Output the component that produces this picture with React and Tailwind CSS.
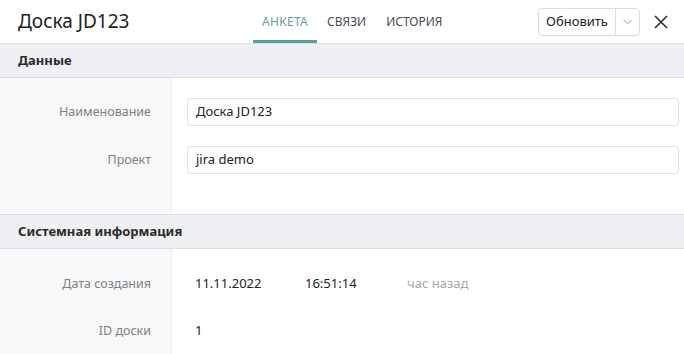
import React from "react";

function Label({ children }) {
  return (
    <div className="h-[28px] flex items-center justify-end text-[12.5px] text-[#808080]">
      {children}
    </div>
  );
}

function Input({ value }) {
  return (
    <div className="h-[28px] flex items-center px-[8px] border border-[#e2e2e2] rounded-[4px] bg-white text-[13px] text-[#222]">
      {value}
    </div>
  );
}

export default function App() {
  return (
    <div className="w-[684px] h-[354px] overflow-hidden bg-white text-[#222]" style={{ fontFamily: '"Noto Sans", "Open Sans", sans-serif' }}>
      {/* header */}
      <div className="h-[44px] flex items-stretch border-b border-[#dcdde0]">
        <div className="w-[253px] shrink-0 pl-[18px] flex items-center text-[19px] text-[#222]">Доска JD123</div>
        <div className="flex items-stretch text-[12px]">
          <div className="relative px-[9px] flex items-center text-[#5e9f9b] tracking-[0.3px]">
            АНКЕТА
            <div className="absolute left-0 right-0 bottom-0 h-[3px] bg-[#5a9e96]" />
          </div>
          <div className="px-[10px] flex items-center text-[#4a4a55]">СВЯЗИ</div>
          <div className="px-[10px] flex items-center text-[#4a4a55]">ИСТОРИЯ</div>
        </div>
        <div className="ml-auto flex items-center pr-[16px]">
          <div className="h-[28px] flex border border-[#dcdcdc] rounded-[4px]">
            <div className="w-[77px] flex items-center justify-center text-[13px] text-[#222] border-r border-[#dcdcdc]">Обновить</div>
            <div className="w-[23px] flex items-center justify-center">
              <svg width="9" height="6" viewBox="0 0 9 6" fill="none">
                <path d="M0.5 0.8 L4.5 4.8 L8.5 0.8" stroke="#9a9a9a" strokeWidth="1" />
              </svg>
            </div>
          </div>
          <div className="ml-[14px] w-[14px] h-[14px] flex items-center justify-center">
            <svg width="14" height="14" viewBox="0 0 14 14" fill="none">
              <path d="M1 1 L13 13 M13 1 L1 13" stroke="#333" strokeWidth="1.7" />
            </svg>
          </div>
        </div>
      </div>

      {/* section 1 header */}
      <div className="h-[34px] flex items-center px-[18px] bg-[#eff0f3] border-b border-[#dcdde0] text-[13px] font-bold text-[#2a2a2a]">
        Данные
      </div>
      {/* section 1 body */}
      <div className="h-[136px] flex">
        <div className="w-[172px] shrink-0 bg-[#f8f9fb] border-r border-[#ececec] pt-[20px] pr-[20px] flex flex-col gap-[20px]">
          <Label>Наименование</Label>
          <Label>Проект</Label>
        </div>
        <div className="flex-1 pt-[20px] pl-[15px] pr-[5px] flex flex-col gap-[20px]">
          <Input value="Доска JD123" />
          <Input value="jira demo" />
        </div>
      </div>

      {/* section 2 header */}
      <div className="h-[35px] flex items-center px-[18px] bg-[#eff0f3] border-y border-[#dcdde0] text-[13px] font-bold text-[#2a2a2a]">
        Системная информация
      </div>
      <div className="h-[106px] flex">
        <div className="w-[172px] shrink-0 bg-[#f8f9fb] border-r border-[#ececec] pt-[21px] pr-[20px] flex flex-col gap-[19px]">
          <Label>Дата создания</Label>
          <Label>ID доски</Label>
        </div>
        <div className="flex-1 pt-[21px] pl-[23px] flex flex-col gap-[19px] text-[13px] text-[#222]">
          <div className="h-[28px] flex items-center">
            <div className="w-[110px]">11.11.2022</div>
            <div className="w-[102px]">16:51:14</div>
            <div className="text-[#a8a8a8]">час назад</div>
          </div>
          <div className="h-[28px] flex items-center">1</div>
        </div>
      </div>
    </div>
  );
}
